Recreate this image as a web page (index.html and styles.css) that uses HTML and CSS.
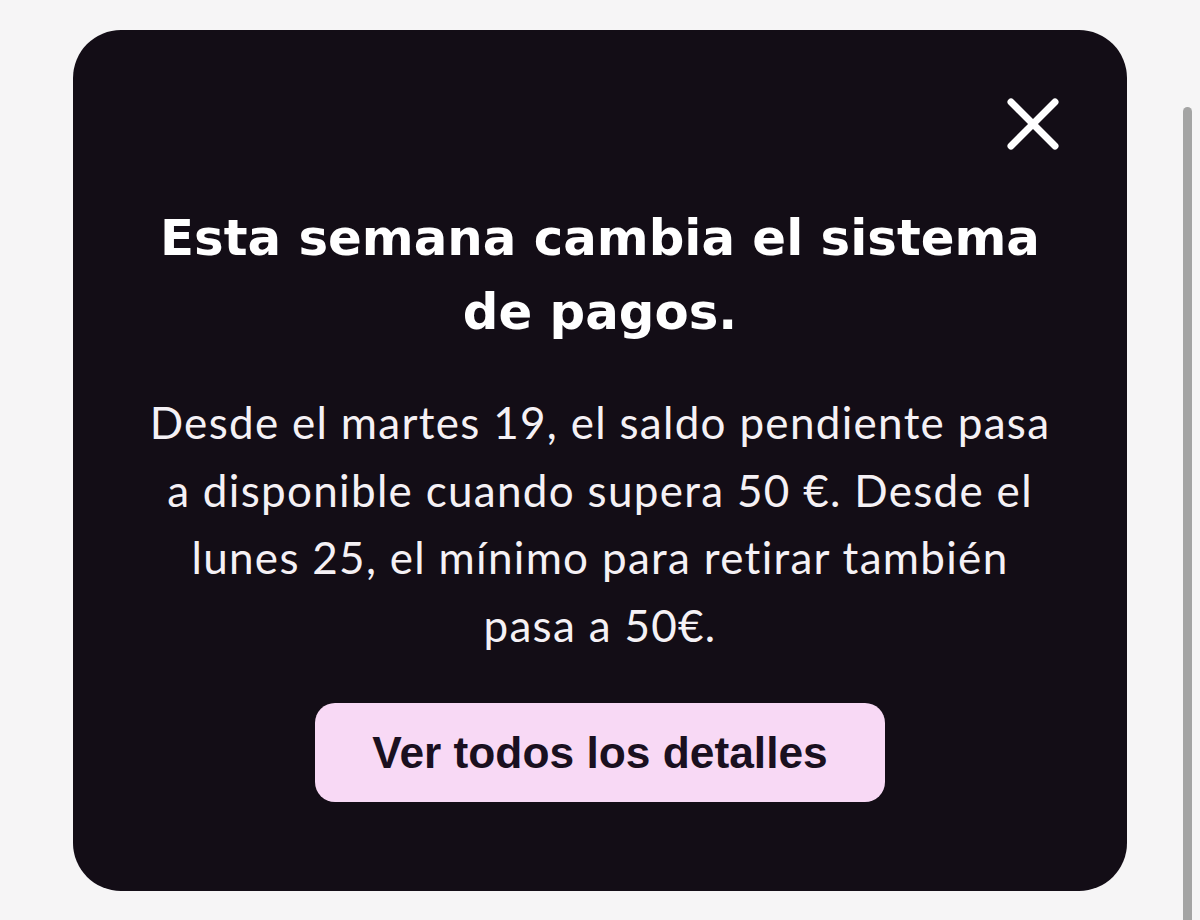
FILE: index.html
```html
<!DOCTYPE html>
<html lang="es">
<head>
    <meta charset="UTF-8">
    <meta name="viewport" content="width=device-width, initial-scale=1.0">
    <title>Cambio en el sistema de pagos</title>
    <link rel="stylesheet" href="styles.css">
</head>
<body>
    <div class="modal">
        <div class="modal-top">
            <button class="close-button" aria-label="Cerrar">
                <svg viewBox="0 0 52 52" width="52" height="52">
                    <path d="M4 4 L48 48 M48 4 L4 48" stroke="#ffffff" stroke-width="7" stroke-linecap="round" fill="none"/>
                </svg>
            </button>
        </div>
        <h1 class="title">Esta semana cambia el sistema<br>de pagos.</h1>
        <p class="message">Desde el martes 19, el saldo pendiente pasa<br>a disponible cuando supera 50 €. Desde el<br>lunes 25, el mínimo para retirar también<br>pasa a 50€.</p>
        <button class="button details-button">Ver todos los detalles</button>
    </div>

    <div class="scroll-thumb"></div>
</body>
</html>
```

FILE: styles.css
```css
body {
    margin: 0;
    padding: 30px 73px 0;
    background-color: #f6f5f6;
    height: 920px;
    box-sizing: border-box;
    overflow: hidden;
}

.modal {
    background-color: #130d16;
    border-radius: 48px;
    padding: 68px 68px 89px;
    display: flex;
    flex-direction: column;
    align-items: center;
    text-align: center;
}

.modal-top {
    align-self: stretch;
    display: flex;
    justify-content: flex-end;
}

.close-button {
    width: 52px;
    height: 52px;
    padding: 0;
    border: none;
    background: none;
    cursor: pointer;
}

.close-button svg {
    display: block;
}

.title {
    margin: 51px 0 0;
    font-family: "DejaVu Sans", sans-serif;
    font-weight: bold;
    font-size: 49.8px;
    line-height: 74px;
    color: #ffffff;
}

.message {
    margin: 40px 0 0;
    font-family: Lato, sans-serif;
    font-size: 44px;
    letter-spacing: 1.3px;
    line-height: 67.5px;
    color: #f5f1f5;
}

.button {
    margin-top: 44px;
    width: 570px;
    height: 99px;
    border: none;
    border-radius: 20px;
    font-family: "Liberation Sans", Arial, sans-serif;
    font-weight: bold;
    font-size: 44.3px;
    cursor: pointer;
}

.details-button {
    background-color: #f8d9f5;
    color: #1a1020;
}

.scroll-thumb {
    position: fixed;
    top: 107px;
    bottom: 0;
    right: 8px;
    width: 9px;
    border-radius: 5px 5px 0 0;
    background-color: #a4a4a4;
}
```
